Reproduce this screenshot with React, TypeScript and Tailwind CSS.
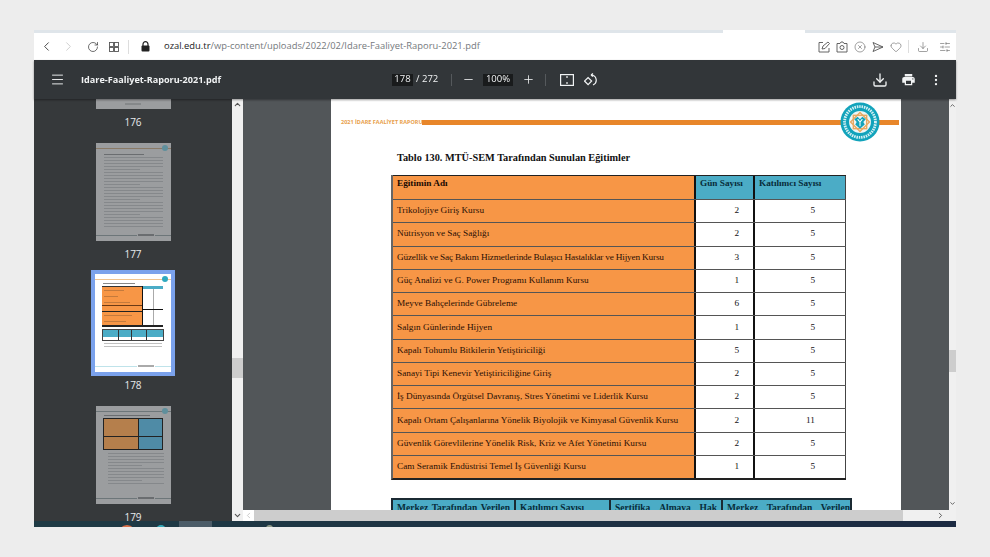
import {
  ChevronDown,
  ChevronLeft,
  ChevronRight,
  ChevronUp,
  CircleX,
  Download,
  Heart,
  Menu,
  Minus,
  MoreVertical,
  Plus,
  RotateCw,
  SlidersHorizontal,
} from "lucide-react";

const rows = [
  ["Trikolojiye Giriş Kursu", "2", "5"],
  ["Nütrisyon ve Saç Sağlığı", "2", "5"],
  ["Güzellik ve Saç Bakım Hizmetlerinde Bulaşıcı Hastalıklar ve Hijyen Kursu", "3", "5"],
  ["Güç Analizi ve G. Power Programı Kullanım Kursu", "1", "5"],
  ["Meyve Bahçelerinde Gübreleme", "6", "5"],
  ["Salgın Günlerinde Hijyen", "1", "5"],
  ["Kapalı Tohumlu Bitkilerin Yetiştiriciliği", "5", "5"],
  ["Sanayi Tipi Kenevir Yetiştiriciliğine Giriş", "2", "5"],
  ["İş Dünyasında Örgütsel Davranış, Stres Yönetimi ve Liderlik Kursu", "2", "5"],
  ["Kapalı Ortam Çalışanlarına Yönelik Biyolojik ve Kimyasal Güvenlik Kursu", "2", "11"],
  ["Güvenlik Görevlilerine Yönelik Risk, Kriz ve Afet Yönetimi Kursu", "2", "5"],
  ["Cam Seramik Endüstrisi Temel İş Güvenliği Kursu", "1", "5"],
];

const Logo = () => (
  <svg width="40" height="40" viewBox="0 0 42 42" className="absolute left-[509px] top-[3px]">
    <circle cx="21" cy="21" r="20.5" fill="#12a3bb" />
    <circle cx="21" cy="21" r="16.2" fill="none" stroke="#d5f0f4" strokeWidth="3" strokeDasharray="1.6 0.9" />
    <circle cx="21" cy="21" r="13" fill="#12a3bb" />
    <circle cx="21" cy="21" r="11.5" fill="#eef7f8" />
    <rect x="14" y="14" width="14" height="14" fill="none" stroke="#e8a862" strokeWidth="1.5" />
    <rect x="14" y="14" width="14" height="14" fill="none" stroke="#e8a862" strokeWidth="1.5" transform="rotate(45 21 21)" />
    <path d="M15 18l3.5-2.5L21 18l2.5-2.5L27 18l-2.5 3 1.500 2.500-5 4.500-5-4.500 1.500-2.500z" fill="#12a3bb" />
    <path d="M18.500 18l2.500 3 2.500-3M21 21v4.500" fill="none" stroke="#ffffff" strokeWidth="1.1" />
  </svg>
);

const Lines = ({ count, className }: { count: number; className: string }) => (
  <div className="flex flex-col gap-[2px]">
    {Array.from({ length: count }).map((_, i) => (
      <div key={i} className={className} style={{ width: i % 5 === 4 ? "62%" : "100%" }} />
    ))}
  </div>
);

const ThumbHeader = ({ line, dot }: { line: string; dot: string }) => (
  <div className="relative h-[3px] mt-[5px]">
    <div className={`h-px ${line}`} />
    <div className={`absolute right-[3px] top-[-3px] w-[6px] h-[6px] rounded-full ${dot}`} />
  </div>
);

const ThumbFooter = ({ color, mid }: { color: string; mid: string }) => (
  <div className="absolute left-0 right-0 bottom-[5px] flex items-center">
    <div className={`h-px flex-1 ${color}`} />
    <div className={`w-[16px] h-[2px] mx-[1px] ${mid}`} />
    <div className={`h-px w-[16px] ${color}`} />
  </div>
);

const Thumb177 = () => (
  <div className="relative w-[75px] h-[98px] bg-[#9b9d9f] overflow-hidden">
    <ThumbHeader line="bg-[#8a7a66]" dot="bg-[#5f8f9c]" />
    <div className="px-[8px] pt-[3px]">
      <div className="w-[40px] h-px bg-[#6a6d70] mb-[2px]" />
      <Lines count={24} className="h-px bg-[#85888b]" />
    </div>
    <ThumbFooter color="bg-[#6d7679]" mid="bg-[#6a6d70]" />
  </div>
);

const Thumb178 = () => (
  <div className="border-[4px] border-[#7ba2ec]">
    <div className="relative w-[76px] h-[98px] bg-white overflow-hidden">
      <ThumbHeader line="bg-[#f1c48f]" dot="bg-[#2fa9bf]" />
      <div className="px-[7px] pt-[1px]">
        <div className="w-[32px] h-px bg-[#888888] mb-[2px] ml-[1px]" />
        <div className="w-[61px] h-[41px] flex border-b-2 border-[#222222]">
          <div className="w-[40px] bg-[#f79646] border-t border-[#333333] flex flex-col">
            <div className="h-[18px] flex flex-col justify-around px-[2px]">
              <div className="h-px w-[20px] bg-[#c47a3c]" />
              <div className="h-px w-[14px] bg-[#c47a3c]" />
              <div className="h-px w-[26px] bg-[#c47a3c]" />
            </div>
            <div className="h-px bg-[#6b3a16]" />
            <div className="h-[5px]" />
            <div className="h-px bg-[#222222]" />
            <div className="flex-1 flex flex-col justify-around px-[2px]">
              <div className="h-px w-[28px] bg-[#c47a3c]" />
              <div className="h-px w-[22px] bg-[#c47a3c]" />
            </div>
          </div>
          <div className="flex-1 border-l border-[#111111] flex flex-col">
            <div className="h-[3px] bg-[#4bacc6]" />
            <div className="h-[21px] border-b border-[#111111] flex">
              <div className="flex-1 border-r border-[#aaaaaa]" />
              <div className="flex-1" />
            </div>
            <div className="flex-1 flex">
              <div className="flex-1 border-r border-[#aaaaaa]" />
              <div className="flex-1" />
            </div>
          </div>
        </div>
        <div className="w-[62px] h-[12px] mt-[2px] flex border border-[#444444]">
          {[16, 13, 15, 16].map((w, i) => (
            <div key={i} className="border-r border-[#333333] last:border-r-0 flex flex-col" style={{ width: w }}>
              <div className="h-[7px] bg-[#4bacc6]" />
            </div>
          ))}
        </div>
        <div className="w-[58px] mt-[2px] ml-[2px]">
          <Lines count={2} className="h-px bg-[#c0c0c0]" />
        </div>
      </div>
      <ThumbFooter color="bg-[#bfe3ea]" mid="bg-[#aaaaaa]" />
    </div>
  </div>
);

const Thumb179 = () => (
  <div className="relative w-[75px] h-[98px] bg-[#9b9d9f] overflow-hidden">
    <ThumbHeader line="bg-[#6d7679]" dot="bg-[#5f8f9c]" />
    <div className="px-[7px] pt-[1px]">
      <div className="w-[46px] h-px bg-[#6a6d70] mb-[2px] ml-[1px]" />
      <div className="w-[60px] h-[32px] flex border border-[#222222]">
        <div className="w-[35px] bg-[#b57f4c] border-r border-[#222222]">
          <div className="h-px bg-[#222222] mt-[17px]" />
        </div>
        <div className="flex-1 bg-[#4f8ba6]">
          <div className="h-px bg-[#222222] mt-[17px]" />
        </div>
      </div>
      <div className="pt-[3px] pl-[5px]">
        <Lines count={11} className="h-px bg-[#85888b]" />
      </div>
    </div>
    <ThumbFooter color="bg-[#6d7679]" mid="bg-[#6a6d70]" />
  </div>
);

const ThumbLabel = ({ n, className }: { n: number; className: string }) => (
  <div className={`text-[10px] leading-[12px] text-[#e8eaed] ${className}`}>{n}</div>
);

const Sidebar = () => (
  <aside className="w-[198px] h-full bg-[#36393b] overflow-hidden flex flex-col items-center shrink-0 font-['Open_Sans',sans-serif]">
    <div className="w-[75px] h-[10px] bg-[#9b9d9f] flex justify-center pt-[4px] shrink-0">
      <div className="w-[16px] h-[2px] bg-[#85888a]" />
    </div>
    <ThumbLabel n={176} className="mt-[7px]" />
    <div className="mt-[15px]"><Thumb177 /></div>
    <ThumbLabel n={177} className="mt-[7px]" />
    <div className="mt-[10px]"><Thumb178 /></div>
    <ThumbLabel n={178} className="mt-[3px]" />
    <div className="mt-[15px]"><Thumb179 /></div>
    <ThumbLabel n={179} className="mt-[7px]" />
  </aside>
);

const MainTable = () => (
  <div className="w-[455px] ml-[60px] mt-[11px] border-l-2 border-[#666666] border-b-2 border-b-[#222222] font-['Liberation_Serif',serif] text-[9.25px] antialiased">
    <div className="grid grid-cols-[301px_59px_93px] h-[24px] font-bold border-t border-[#222222]">
      <div className="bg-[#f79646] text-[#1a0a02] pl-[4px] pt-[1px]">Eğitimin Adı</div>
      <div className="bg-[#4bacc6] text-[#082c3a] border-l-2 border-[#111111] pl-[4px] pt-[1px]">Gün Sayısı</div>
      <div className="bg-[#4bacc6] text-[#082c3a] border-l-2 border-[#111111] pl-[4px] pt-[1px] border-r border-r-[#444444]">Katılımcı Sayısı</div>
    </div>
    {rows.map(([name, days, people]) => (
      <div key={name} className="grid grid-cols-[301px_59px_93px] h-[23.27px] items-stretch border-t border-[#555555]">
        <div className={`bg-[#f79646] text-[#2a1005] pl-[4px] flex items-center whitespace-nowrap ${name.startsWith("Güzellik") ? "tracking-[-0.18px]" : ""}`}>{name}</div>
        <div className="bg-white text-[#111111] border-l-2 border-[#111111] flex items-center justify-end pr-[14px]">{days}</div>
        <div className="bg-white text-[#111111] border-l-2 border-[#111111] border-r border-r-[#444444] flex items-center justify-end pr-[30px]">{people}</div>
      </div>
    ))}
  </div>
);

const SecondTable = () => (
  <div className="w-[461px] ml-[60px] mt-[18px] grid grid-cols-[121px_95px_112px_133px] h-[40px] border-2 border-[#1b2a33] bg-[#4bacc6] font-['Liberation_Serif',serif] font-bold text-[9.5px] text-[#082c3a] leading-[12px] antialiased">
    <div className="px-[4px] pt-[2px] flex justify-between"><span>Merkez</span><span>Tarafından</span><span>Verilen</span></div>
    <div className="px-[4px] pt-[2px] border-l-2 border-[#1b2a33]">Katılımcı Sayısı</div>
    <div className="px-[4px] pt-[2px] border-l-2 border-[#1b2a33] flex justify-between"><span>Sertifika</span><span>Almaya</span><span>Hak</span></div>
    <div className="px-[4px] pt-[2px] border-l-2 border-[#1b2a33] flex justify-between"><span>Merkez</span><span>Tarafından</span><span>Verilen</span></div>
  </div>
);

const AddressBar = () => (
  <div className="h-[27px] bg-white flex items-center pl-[5px] pr-[5px] text-[#5f6368] font-['Open_Sans',sans-serif] shrink-0">
    <ChevronLeft size={15} strokeWidth={1.4} className="text-[#333333]" />
    <ChevronRight size={15} strokeWidth={1.3} className="ml-[7px] text-[#c4c4c4]" />
    <RotateCw size={12} strokeWidth={1.4} className="ml-[11px] text-[#333333]" />
    <svg width="10" height="10" viewBox="0 0 10 10" className="ml-[10px]" fill="none" stroke="#555555" strokeWidth="0.9">
      <rect x="0.5" y="0.5" width="4" height="4" />
      <rect x="5.5" y="0.5" width="4" height="4" />
      <rect x="0.5" y="5.5" width="4" height="4" />
      <rect x="5.5" y="5.5" width="4" height="4" />
    </svg>
    <div className="w-px h-[14px] bg-[#dddddd] ml-[9px]" />
    <svg width="9" height="11" viewBox="0 0 9 11" className="ml-[12px]">
      <path d="M2 5V3.2a2.5 2.5 0 0 1 5 0V5" fill="none" stroke="#222222" strokeWidth="1.2" />
      <rect x="0.5" y="4.5" width="8" height="6" rx="1" fill="#222222" />
    </svg>
    <div className="ml-[14px] text-[9.4px] whitespace-nowrap text-[#75797d]">
      <span className="text-[#202124]">ozal.edu.tr</span>/wp-content/uploads/2022/02/Idare-Faaliyet-Raporu-2021.pdf
    </div>
    <div className="ml-auto flex items-center text-[#555555]">
      <svg width="12" height="12" viewBox="0 0 12 12" fill="none" stroke="currentColor" strokeWidth="0.9">
        <path d="M5 1.5H1v9.5h10V7M4 8l1-3 5-4 1.5 1.5-4.5 5z" />
      </svg>
      <svg width="12" height="12" viewBox="0 0 12 12" className="ml-[6px]" fill="none" stroke="currentColor" strokeWidth="0.9">
        <path d="M1 2.5h3l1-1.5h2l1 1.5h3v8.500H1z" />
        <circle cx="6" cy="6.5" r="2" />
      </svg>
      <CircleX size={12} strokeWidth={1.1} className="ml-[6px]" />
      <svg width="12" height="12" viewBox="0 0 12 12" className="ml-[6px]" fill="none" stroke="currentColor" strokeWidth="0.9">
        <path d="M1 1.5L11 6 1 10.5 3 6zM3 6h8" />
      </svg>
      <Heart size={12} strokeWidth={1.1} className="ml-[6px]" />
      <div className="w-px h-[13px] bg-[#dddddd] ml-[6px]" />
      <Download size={12} strokeWidth={1.1} className="ml-[8px]" />
      <SlidersHorizontal size={12} strokeWidth={1.1} className="ml-[10px]" />
    </div>
  </div>
);

const PdfToolbar = () => (
  <div className="h-[39px] bg-[#323639] flex items-center text-[#f1f3f4] font-['Open_Sans',sans-serif] shrink-0 shadow-[0_1px_2px_rgba(0,0,0,0.4)] z-10 relative">
    <Menu size={15} strokeWidth={1.5} className="ml-[16px]" />
    <div className="ml-[16px] w-[301px] text-[9.1px] font-bold whitespace-nowrap">Idare-Faaliyet-Raporu-2021.pdf</div>
    <div className="bg-[#191b1c] w-[21px] h-[12px] ml-[10px] flex items-center justify-center text-[9.5px]">178</div>
    <div className="ml-[3px] text-[9.5px] w-[25px]">/ 272</div>
    <div className="w-px h-[12px] bg-[#55595c] ml-[10px]" />
    <Minus size={13} strokeWidth={1.5} className="ml-[10px]" />
    <div className="bg-[#191b1c] w-[30px] h-[12px] ml-[8px] flex items-center justify-center text-[9.5px]">100%</div>
    <Plus size={13} strokeWidth={1.5} className="ml-[9px]" />
    <div className="w-px h-[12px] bg-[#55595c] ml-[10px]" />
    <svg width="14" height="12" viewBox="0 0 14 12" className="ml-[14px]" fill="none" stroke="currentColor" strokeWidth="1.2">
      <rect x="0.6" y="0.6" width="12.8" height="10.8" />
      <path d="M7 2.2v1.6M7 8.2v1.6" strokeWidth="1.6" />
    </svg>
    <svg width="14" height="14" viewBox="0 0 14 14" className="ml-[10px]" fill="none" stroke="currentColor" strokeWidth="1.2">
      <rect x="1.6" y="5.6" width="5" height="5" transform="rotate(45 4.1 8.1)" />
      <path d="M7 2a5.2 5.2 0 0 1 2 10M7 2l2-1.5M7 2l2 1.5" />
    </svg>
    <Download size={16} strokeWidth={2} className="ml-auto" />
    <svg width="15" height="15" viewBox="0 0 24 24" className="ml-[13px]" fill="currentColor">
      <path d="M19 8H5c-1.66 0-3 1.34-3 3v6h4v4h12v-4h4v-6c0-1.66-1.34-3-3-3zm-3 11H8v-5h8v5zm3-7c-.55 0-1-.45-1-1s.45-1 1-1 1 .45 1 1-.45 1-1 1zm-1-9H6v4h12V3z" />
    </svg>
    <MoreVertical size={14} strokeWidth={2} className="ml-[13px] mr-[13px]" />
  </div>
);

const Viewer = () => (
  <div className="flex-1 flex flex-col min-w-0 h-full">
    <div className="flex-1 min-h-0 flex">
      <div className="flex-1 bg-[#525659] pl-[88px] overflow-hidden relative">
        <div className="w-[570px] h-[560px] bg-white pt-[21px] relative">
          <div className="flex items-center pl-[10px] h-[5px]">
            <span className="text-[5.5px] font-bold text-[#e8a04a] font-['Open_Sans',sans-serif] whitespace-nowrap w-[81px]">2021 İDARE FAALİYET RAPORU</span>
            <div className="w-[477px] h-[5px] bg-[#e8862a]" />
          </div>
          <Logo />
          <div className="mt-[26px] ml-[66px] font-['Liberation_Serif',serif] font-bold text-[10.3px] leading-[13px] text-[#111111] whitespace-nowrap antialiased">
            Tablo 130. MTÜ-SEM Tarafından Sunulan Eğitimler
          </div>
          <MainTable />
          <SecondTable />
        </div>
      </div>
      <div className="w-[7px] bg-[#f0f0f0] flex flex-col items-center relative shrink-0">
        <ChevronUp size={7} strokeWidth={3} className="text-[#555555] mt-[3px]" />
        <div className="absolute left-0 top-[251px] w-[7px] h-[22px] bg-[#cdcdcd]" />
        <ChevronDown size={7} strokeWidth={3} className="text-[#555555] mt-auto mb-[3px]" />
      </div>
    </div>
    <div className="h-[11px] flex items-center shrink-0">
      <div className="w-[11px] h-full bg-white flex items-center justify-center">
        <ChevronLeft size={9} strokeWidth={2} className="text-[#bbbbbb]" />
      </div>
      <div className="w-[649px] h-full bg-[#cdcdcd]" />
      <div className="flex-1 h-full bg-[#f0f0f0] flex items-center justify-end pr-[11px]">
        <ChevronRight size={9} strokeWidth={2.5} className="text-[#555555]" />
      </div>
    </div>
  </div>
);

const Taskbar = () => (
  <div className="h-[6px] bg-gradient-to-r from-[#1f3b45] to-[#1c2a42] flex overflow-hidden shrink-0 relative font-['Open_Sans',sans-serif]">
    <div className="ml-[84px] mt-[4px] w-[18px] h-[18px] rounded-full bg-[#d9704a]" />
    <div className="ml-[20px] mt-[4px] w-[10px] h-[10px] rounded-full bg-[#35a9b8]" />
    <div className="ml-[13px] w-[33px] h-[8px] bg-[#4c5c68]" />
    <div className="ml-[54px] mt-[4px] w-[7px] h-[7px] rounded-full bg-[#8f9a8a]" />
    <div className="ml-auto flex text-[8px] leading-[10px] text-[#d5dadf] pt-[3px] pr-[48px] gap-[20px]">
      <span>20:0</span>
      <span>01:07</span>
    </div>
  </div>
);

export default function App() {
  return (
    <div className="w-[990px] h-[557px] bg-[#ededed] pl-[34px] pt-[30px] overflow-hidden">
      <div className="w-[922px] h-[497px] flex flex-col blur-[0.3px]">
        <div className="h-[3px] flex shrink-0">
          <div className="w-[689px] bg-[#dfe5ea]" />
          <div className="w-[82px] bg-white" />
          <div className="flex-1 bg-[#dfe5ea]" />
        </div>
        <AddressBar />
        <PdfToolbar />
        <div className="flex-1 min-h-0 flex">
          <Sidebar />
          <div className="w-[11px] h-full bg-[#f0f0f0] flex flex-col items-center relative shrink-0">
            <ChevronUp size={9} strokeWidth={3} className="text-[#555555] mt-[1px]" />
            <div className="absolute left-0 top-[259px] w-[11px] h-[20px] bg-[#cdcdcd]" />
            <ChevronDown size={9} strokeWidth={3} className="text-[#555555] mt-auto mb-[1px]" />
          </div>
          <Viewer />
        </div>
        <Taskbar />
      </div>
    </div>
  );
}
